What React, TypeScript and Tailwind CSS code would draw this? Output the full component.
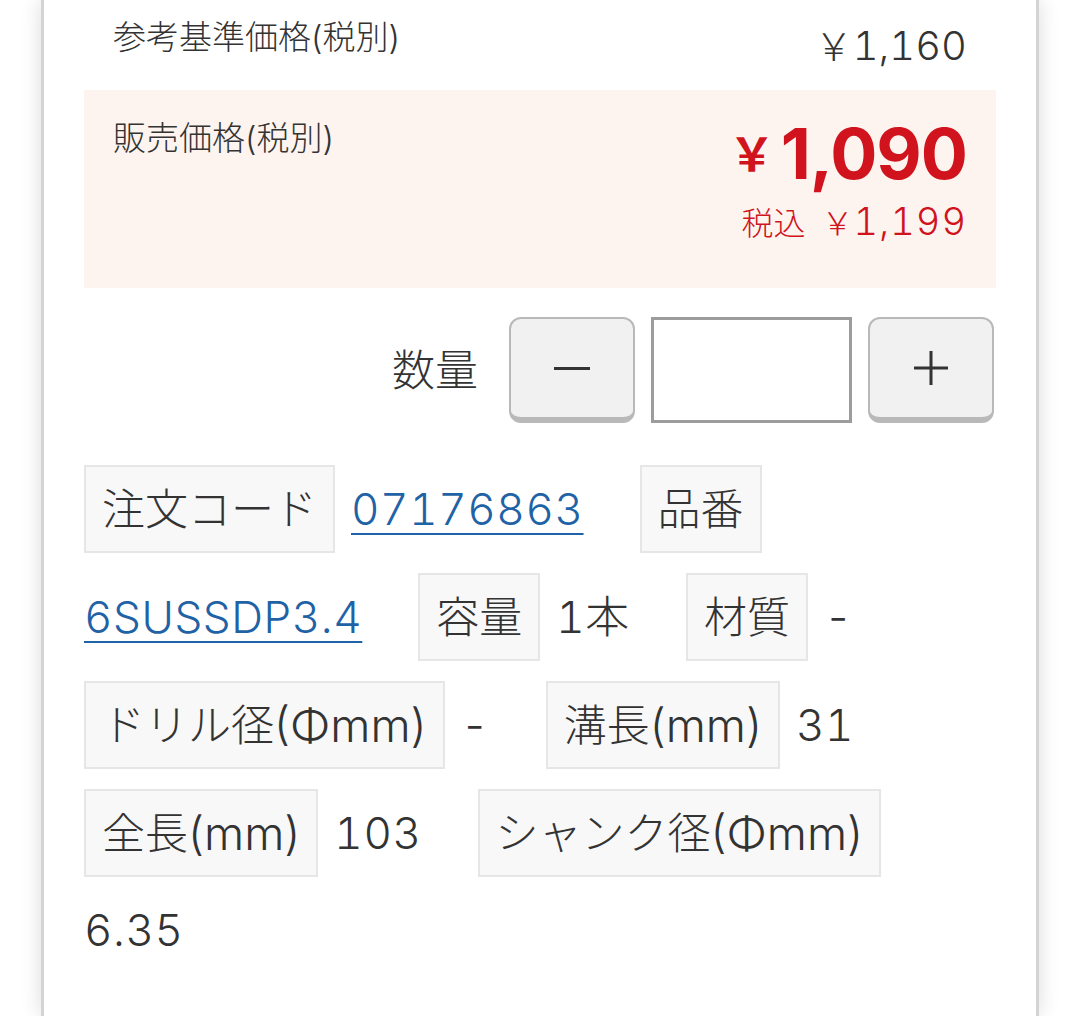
import React from 'react';

type Spec = {
  label: string;
  value: string;
  href?: boolean;
};

const specs: Spec[] = [
  { label: '注文コード', value: '07176863', href: true },
  { label: '品番', value: '6SUSSDP3.4', href: true },
  { label: '容量', value: '1本' },
  { label: '材質', value: '-' },
  { label: 'ドリル径(Φmm)', value: '-' },
  { label: '溝長(mm)', value: '31' },
  { label: '全長(mm)', value: '103' },
  { label: 'シャンク径(Φmm)', value: '6.35' },
];

// latin runs in labels are set a little larger, like the reference font
const Label = ({ text }: { text: string }) => (
  <>
    {text.split(/([()Φa-z]+)/).map((part, i) =>
      /[()Φa-z]/.test(part) ? (
        <span key={i} className="text-[46px]">
          {part}
        </span>
      ) : (
        <span key={i}>{part}</span>
      )
    )}
  </>
);

const QtyButton = ({ children }: { children: React.ReactNode }) => (
  <button className="flex h-[106px] w-[126px] items-center justify-center rounded-[12px] border-2 border-b-[6px] border-[#b9b9b9] bg-[#f1f1f1]">
    {children}
  </button>
);

export default function App() {
  return (
    <div className="min-h-[1016px] overflow-hidden bg-white font-['Inter','Noto_Sans_CJK_JP',sans-serif] font-light text-[#333]">
      <div className="ml-[41px] min-h-[1016px] w-[998px] border-x-[3px] border-[#d4d4d4] bg-white px-10 shadow-[0_0_20px_rgba(0,0,0,0.14)]">
        {/* Reference price */}
        <div className="flex h-[90px] justify-between px-[29px]">
          <span className="pt-[12px] text-[33px] leading-[50px]">参考基準価格(税別)</span>
          <span className="pt-[19px] text-[38px] leading-[54px] tabular-nums">
            ￥<span className="text-[40px]">1,160</span>
          </span>
        </div>

        {/* Sale price */}
        <div className="flex h-[198px] justify-between bg-[#fdf4f0] px-[29px]">
          <span className="pt-[23px] text-[33px] leading-[50px]">販売価格(税別)</span>
          <div className="flex flex-col items-end pt-[29px] text-[#d0131c]">
            <div className="flex items-baseline font-bold leading-none">
              <span className="relative bottom-[8px] text-[46px]">￥</span>
              <span className="ml-[6px] text-[70px] tracking-[-1px]">1,090</span>
            </div>
            <div className="mt-[8px] flex items-baseline text-[32px] leading-[48px]">
              <span>税込</span>
              <span className="ml-[16px]">￥</span>
              <span className="text-[38px] tracking-[1px] tabular-nums">1,199</span>
            </div>
          </div>
        </div>

        {/* Quantity */}
        <div className="mt-[29px] flex items-center justify-end gap-4 pr-[2px]">
          <span className="mr-[15px] text-[43px] leading-none">数量</span>
          <QtyButton>
            <span className="block h-[3px] w-[36px] bg-[#333]" />
          </QtyButton>
          <input
            className="h-[106px] w-[201px] border-[3px] border-[#9c9c9c] bg-white outline-none"
            aria-label="数量"
          />
          <QtyButton>
            <svg width="38" height="38" viewBox="0 0 38 38">
              <path d="M19 2v34M2 19h34" stroke="#333" strokeWidth="3" />
            </svg>
          </QtyButton>
        </div>

        {/* Spec list */}
        <dl className="mt-[42px] flex flex-wrap items-center gap-y-[20px]">
          {specs.map((s, i) => (
            <React.Fragment key={i}>
              <dt className="mr-4 flex h-[88px] items-center border-2 border-[#e6e6e6] bg-[#f8f8f8] px-4 text-[43px] leading-none">
                <Label text={s.label} />
              </dt>
              <dd className="mr-14 text-[44px] leading-[66px] tracking-[0.6px] tabular-nums">
                {s.href ? (
                  <a href="#" className="text-[#1f62a5] underline decoration-2 underline-offset-[8px]">
                    {s.value}
                  </a>
                ) : (
                  s.value
                )}
              </dd>
            </React.Fragment>
          ))}
        </dl>
      </div>
    </div>
  );
}
